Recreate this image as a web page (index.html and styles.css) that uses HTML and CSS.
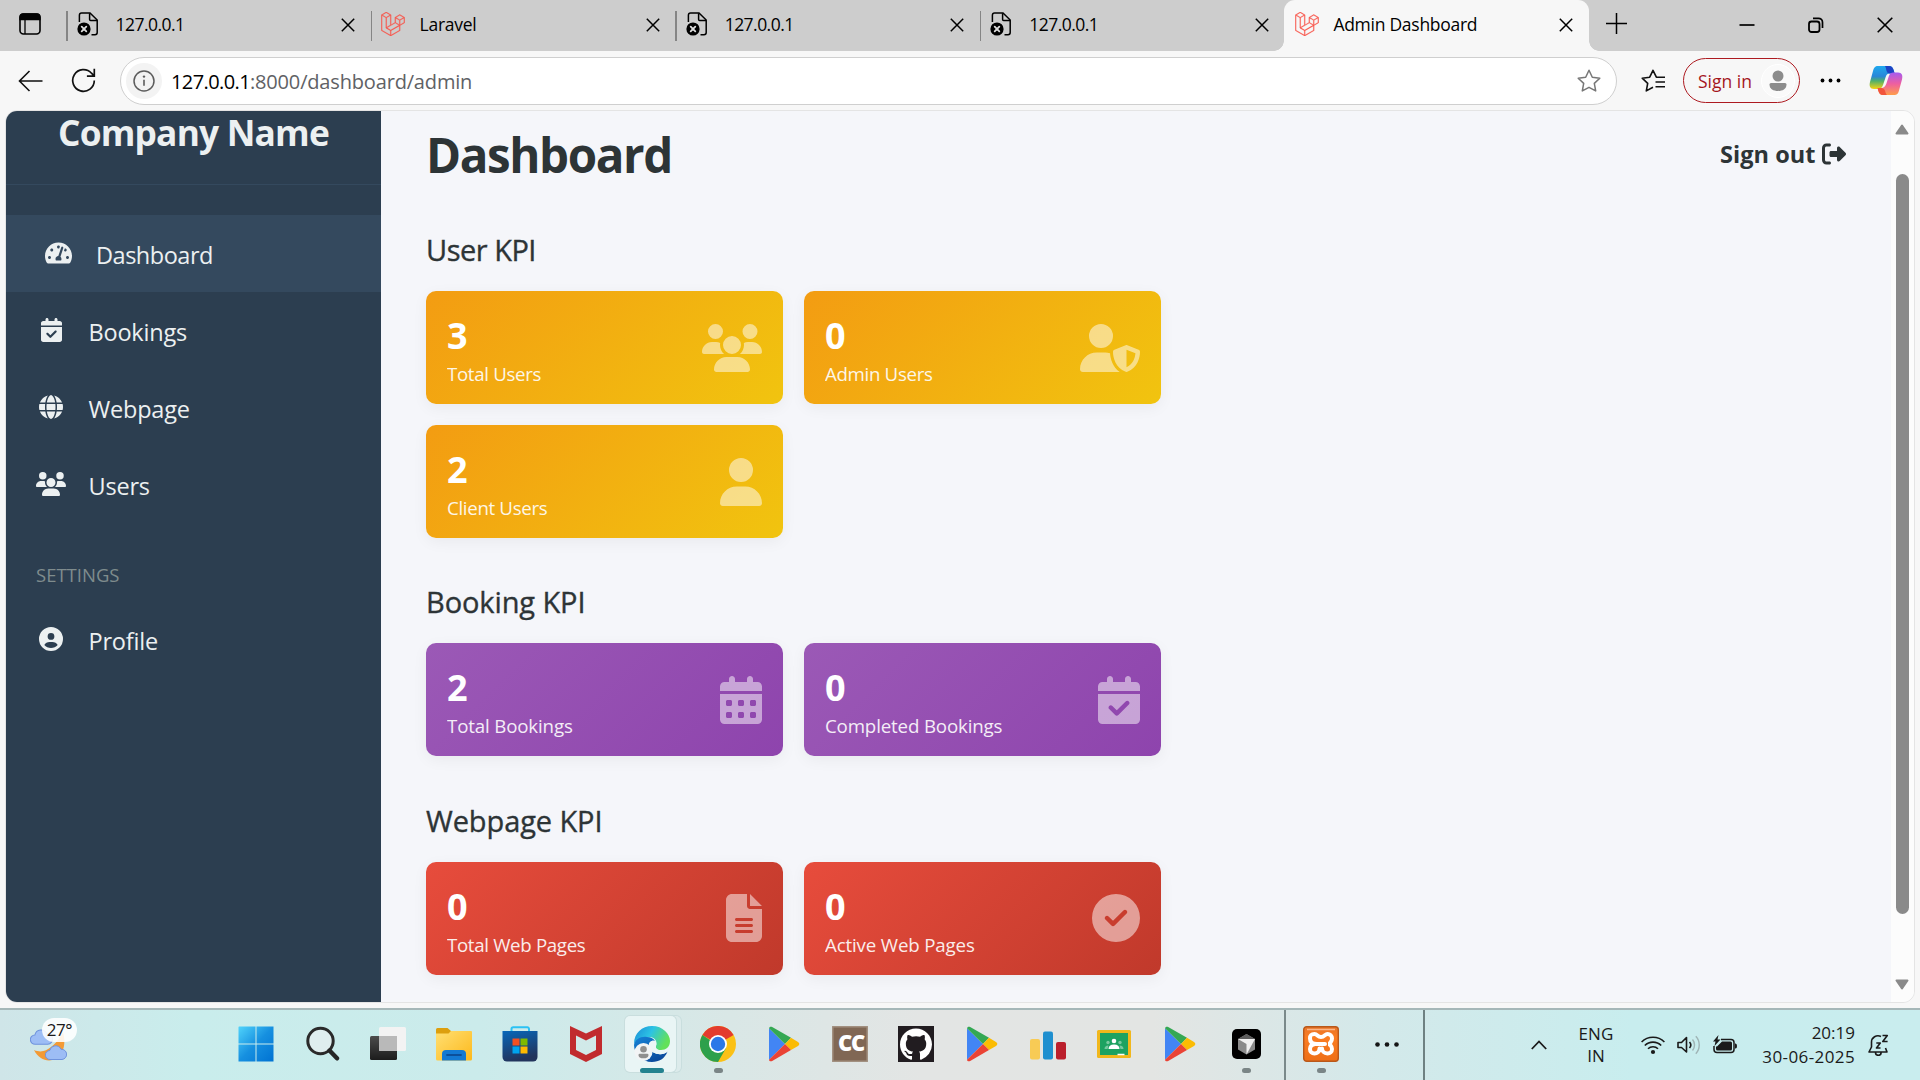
FILE: index.html
```html
<!DOCTYPE html>
<html lang="en">
<head>
<meta charset="utf-8">
<title>Admin Dashboard</title>
<link rel="stylesheet" href="styles.css">
</head>
<body>
<svg class="defs" aria-hidden="true">
  <defs>
    <symbol id="i-users" viewBox="0 0 640 512"><path d="M144 0a80 80 0 1 1 0 160A80 80 0 1 1 144 0zM512 0a80 80 0 1 1 0 160A80 80 0 1 1 512 0zM0 298.7C0 239.8 47.8 192 106.7 192h42.7c15.9 0 31 3.5 44.6 9.7c-1.3 7.2-1.9 14.7-1.9 22.3c0 38.2 16.8 72.5 43.3 96c-.2 0-.4 0-.7 0H21.3C9.6 320 0 310.4 0 298.7zM405.3 320c-.2 0-.4 0-.7 0c26.6-23.5 43.3-57.8 43.3-96c0-7.6-.7-15-1.9-22.3c13.6-6.3 28.7-9.7 44.6-9.7h42.7C592.2 192 640 239.8 640 298.7c0 11.8-9.6 21.3-21.3 21.3H405.3zM224 224a96 96 0 1 1 192 0 96 96 0 1 1 -192 0zM128 485.3C128 411.7 187.7 352 261.3 352H378.7C452.3 352 512 411.7 512 485.3c0 14.7-11.9 26.7-26.7 26.7H154.7c-14.7 0-26.7-11.9-26.7-26.7z"/></symbol>
    <symbol id="i-user" viewBox="0 0 448 512"><path d="M224 256A128 128 0 1 0 224 0a128 128 0 1 0 0 256zm-45.7 48C79.8 304 0 383.8 0 482.3C0 498.7 13.3 512 29.7 512H418.3c16.4 0 29.7-13.3 29.7-29.7C448 383.8 368.2 304 269.7 304H178.3z"/></symbol>
    <symbol id="i-shield" viewBox="0 0 640 512"><path d="M224 256A128 128 0 1 0 224 0a128 128 0 1 0 0 256zm-45.7 48C79.8 304 0 383.8 0 482.3C0 498.7 13.3 512 29.7 512H418.3c1.8 0 3.5-.2 5.3-.5c-76.3-55.1-99.8-141-103.1-200.2c-16.1-4.8-33.1-7.3-50.7-7.3H178.3zm308.8-78.3l-120 48C358 277.4 352 286.2 352 296c0 63.3 25.9 168.8 134.8 214.2c5.9 2.5 12.6 2.5 18.5 0C614.1 464.8 640 359.3 640 296c0-9.8-6-18.6-15.1-22.3l-120-48c-5.7-2.3-12.1-2.3-17.8 0zM591.4 312c-3.9 50.7-27.2 116.7-95.4 149.7V273.8L591.4 312z"/></symbol>
    <symbol id="i-cal" viewBox="0 0 448 512"><path fill-rule="evenodd" d="M128 0c17.7 0 32 14.3 32 32V64H288V32c0-17.7 14.3-32 32-32s32 14.3 32 32V64h48c26.5 0 48 21.5 48 48v48H0V112C0 85.5 21.5 64 48 64H96V32c0-17.7 14.3-32 32-32zM0 192H448V464c0 26.5-21.5 48-48 48H48c-26.5 0-48-21.5-48-48V192zm64 80v32c0 8.8 7.2 16 16 16h32c8.8 0 16-7.2 16-16V272c0-8.8-7.2-16-16-16H80c-8.8 0-16 7.2-16 16zm128 0v32c0 8.8 7.2 16 16 16h32c8.8 0 16-7.2 16-16V272c0-8.8-7.2-16-16-16H208c-8.8 0-16 7.2-16 16zm144-16c-8.8 0-16 7.2-16 16v32c0 8.8 7.2 16 16 16h32c8.8 0 16-7.2 16-16V272c0-8.8-7.2-16-16-16H336zM64 400v32c0 8.8 7.2 16 16 16h32c8.8 0 16-7.2 16-16V400c0-8.8-7.2-16-16-16H80c-8.8 0-16 7.2-16 16zm144-16c-8.8 0-16 7.2-16 16v32c0 8.8 7.2 16 16 16h32c8.8 0 16-7.2 16-16V400c0-8.8-7.2-16-16-16H208zm112 16v32c0 8.8 7.2 16 16 16h32c8.8 0 16-7.2 16-16V400c0-8.8-7.2-16-16-16H336c-8.8 0-16 7.2-16 16z"/></symbol>
    <symbol id="i-calcheck" viewBox="0 0 448 512"><path fill-rule="evenodd" d="M128 0c17.7 0 32 14.3 32 32V64H288V32c0-17.7 14.3-32 32-32s32 14.3 32 32V64h48c26.5 0 48 21.5 48 48v48H0V112C0 85.5 21.5 64 48 64H96V32c0-17.7 14.3-32 32-32zM0 192H448V464c0 26.5-21.5 48-48 48H48c-26.5 0-48-21.5-48-48V192zM329 305c9.4-9.4 9.4-24.6 0-33.9s-24.6-9.4-33.9 0l-95 95-47-47c-9.4-9.4-24.6-9.4-33.9 0s-9.4 24.6 0 33.9l64 64c9.4 9.4 24.6 9.4 33.9 0L329 305z"/></symbol>
    <symbol id="i-file" viewBox="0 0 384 512"><path fill-rule="evenodd" d="M64 0C28.7 0 0 28.7 0 64V448c0 35.3 28.7 64 64 64H320c35.3 0 64-28.7 64-64V160H256c-17.7 0-32-14.3-32-32V0H64zM256 0V128H384L256 0zM112 256H272c8.8 0 16 7.2 16 16s-7.2 16-16 16H112c-8.8 0-16-7.2-16-16s7.2-16 16-16zm0 64H272c8.8 0 16 7.2 16 16s-7.2 16-16 16H112c-8.8 0-16-7.2-16-16s7.2-16 16-16zm0 64H272c8.8 0 16 7.2 16 16s-7.2 16-16 16H112c-8.8 0-16-7.2-16-16s7.2-16 16-16z"/></symbol>
    <symbol id="i-check" viewBox="0 0 512 512"><path fill-rule="evenodd" d="M256 512A256 256 0 1 0 256 0a256 256 0 1 0 0 512zM369 209L241 337c-9.4 9.4-24.6 9.4-33.9 0l-64-64c-9.4-9.4-9.4-24.6 0-33.9s24.6-9.4 33.9 0l47 47L335 175c9.4-9.4 24.6-9.4 33.9 0s9.4 24.6 0 33.9z"/></symbol>
    <symbol id="i-globe" viewBox="0 0 512 512"><path d="M352 256c0 22.2-1.2 43.6-3.3 64H163.3c-2.2-20.4-3.3-41.8-3.3-64s1.2-43.6 3.3-64H348.7c2.2 20.4 3.3 41.8 3.3 64zm28.8-64H503.9c5.3 20.5 8.1 41.9 8.1 64s-2.8 43.5-8.1 64H380.8c2.1-20.6 3.2-42 3.2-64s-1.1-43.4-3.2-64zm112.6-32H376.7c-10-63.9-29.8-117.4-55.3-151.6c78.3 20.7 142 77.5 171.9 151.6zm-149.1 0H167.7c6.1-36.4 15.5-68.6 27-94.7c10.5-23.6 22.2-40.7 33.5-51.5C239.4 3.2 248.7 0 256 0s16.6 3.2 27.8 13.8c11.3 10.8 23 27.9 33.5 51.5c11.6 26 20.9 58.2 27 94.7zm-209 0H18.6C48.6 85.9 112.2 29.1 190.6 8.4C165.1 42.6 145.3 96.1 135.3 160zM8.1 192H131.2c-2.1 20.6-3.2 42-3.2 64s1.1 43.4 3.2 64H8.1C2.8 299.5 0 278.1 0 256s2.8-43.5 8.1-64zM194.7 446.6c-11.6-26-20.9-58.2-27-94.6H344.3c-6.1 36.4-15.5 68.6-27 94.6c-10.5 23.6-22.2 40.7-33.5 51.5C272.6 508.8 263.3 512 256 512s-16.6-3.2-27.8-13.8c-11.3-10.8-23-27.9-33.5-51.5zM135.3 352c10 63.9 29.8 117.4 55.3 151.6C112.2 482.9 48.6 426.1 18.6 352H135.3zm358.1 0c-30 74.1-93.6 130.9-171.9 151.6c25.5-34.2 45.2-87.7 55.3-151.6H493.4z"/></symbol>
    <symbol id="i-profile" viewBox="0 0 512 512"><path d="M399 384.2C376.9 345.8 335.4 320 288 320H224c-47.4 0-88.9 25.8-111 64.2c35.2 39.2 86.2 63.8 143 63.8s107.8-24.7 143-63.8zM0 256a256 256 0 1 1 512 0A256 256 0 1 1 0 256zm256 16a72 72 0 1 0 0-144 72 72 0 1 0 0 144z" fill-rule="evenodd"/></symbol>
    <symbol id="i-gauge" viewBox="0 0 576 512"><path fill-rule="evenodd" d="M288 32C128.94 32 0 160.94 0 320c0 52.8 14.25 102.26 39.06 144.8 5.61 9.62 16.3 15.2 27.44 15.2h443c11.14 0 21.83-5.58 27.44-15.2C561.75 422.26 576 372.8 576 320c0-159.06-128.94-288-288-288zm0 64c14.71 0 26.58 10.13 30.32 23.65-1.11 2.26-2.64 4.23-3.45 6.67l-9.22 27.67c-5.13 3.49-10.97 6.01-17.64 6.01-17.67 0-32-14.33-32-32S270.33 96 288 96zM96 384c-17.67 0-32-14.33-32-32s14.33-32 32-32 32 14.33 32 32-14.33 32-32 32zm48-160c-17.67 0-32-14.33-32-32s14.33-32 32-32 32 14.33 32 32-14.33 32-32 32zm246.77-72.41l-61.33 184C343.13 347.33 352 364.54 352 384c0 11.72-3.38 22.55-8.88 32H232.88c-5.5-9.45-8.88-20.28-8.88-32 0-33.94 26.5-61.43 59.9-63.59l61.34-184.01c4.17-12.56 17.73-19.45 30.36-15.17 12.57 4.19 19.35 17.79 15.17 30.36zm14.66 57.2l15.52-46.55c3.47-1.29 7.13-2.23 11.05-2.23 17.67 0 32 14.33 32 32s-14.33 32-32 32c-11.38-.01-20.89-6.28-26.57-15.22zM480 384c-17.67 0-32-14.33-32-32s14.33-32 32-32 32 14.33 32 32-14.33 32-32 32z"/></symbol>
    <symbol id="i-signout" viewBox="0 0 512 512"><path d="M377.9 105.9L500.7 228.7c7.2 7.2 11.3 17.1 11.3 27.3s-4.1 20.1-11.3 27.3L377.9 406.1c-6.4 6.4-15 9.9-24 9.9c-18.7 0-33.9-15.2-33.9-33.9l0-62.1-128 0c-17.7 0-32-14.3-32-32l0-64c0-17.7 14.3-32 32-32l128 0 0-62.1c0-18.7 15.2-33.9 33.9-33.9c9 0 17.6 3.6 24 9.9zM160 96L96 96c-17.7 0-32 14.3-32 32l0 256c0 17.7 14.3 32 32 32l64 0c17.7 0 32 14.3 32 32s-14.3 32-32 32l-64 0c-53 0-96-43-96-96L0 128C0 75 43 32 96 32l64 0c17.7 0 32 14.3 32 32s-14.3 32-32 32z"/></symbol>
    <symbol id="i-laravel" viewBox="0 0 24 24"><path fill="#f9554a" stroke="#f9554a" stroke-width=".3" d="M23.642 5.43a.364.364 0 01.014.1v5.149c0 .135-.073.26-.189.326l-4.323 2.49v4.934a.378.378 0 01-.188.326L9.93 23.949a.316.316 0 01-.066.027c-.008.002-.016.008-.024.01a.348.348 0 01-.192 0c-.011-.002-.02-.008-.03-.012-.02-.008-.042-.014-.062-.025L.533 18.755a.376.376 0 01-.189-.326V2.974c0-.033.005-.066.014-.098.003-.012.01-.02.014-.032a.369.369 0 01.023-.058c.004-.013.015-.022.023-.033l.033-.045c.012-.01.025-.018.037-.027.014-.012.027-.024.041-.034H.53L5.043.05a.375.375 0 01.375 0L9.93 2.647h.002c.015.01.027.021.04.033l.038.027c.013.014.02.03.033.045.008.011.02.021.025.033.01.02.017.038.024.058.003.011.01.021.013.032.01.031.014.064.014.098v9.652l3.76-2.164V5.527c0-.033.004-.066.013-.098.003-.01.01-.02.013-.032a.487.487 0 01.024-.059c.007-.012.018-.02.025-.033.012-.015.021-.03.033-.043.012-.012.025-.02.037-.028.014-.01.026-.023.041-.032h.001l4.513-2.598a.375.375 0 01.375 0l4.513 2.598c.016.01.027.021.042.031.012.01.025.018.036.028.013.014.022.03.034.044.008.012.019.021.024.033.011.02.018.04.024.06.006.01.012.021.015.032zm-.74 5.032V6.179l-1.578.908-2.182 1.256v4.283zm-4.51 7.75v-4.287l-2.147 1.225-6.126 3.498v4.325zM1.093 3.624v14.588l8.273 4.761v-4.325l-4.322-2.445-.002-.003H5.04c-.014-.01-.025-.021-.04-.031-.011-.01-.024-.018-.035-.027l-.001-.002c-.013-.012-.021-.025-.031-.04-.01-.011-.021-.022-.028-.036h-.003c-.008-.014-.013-.031-.02-.047-.006-.016-.014-.027-.018-.043a.49.49 0 01-.008-.057c-.002-.014-.006-.027-.006-.041V5.789l-2.18-1.257zM5.23.81L1.47 2.974l3.76 2.164 3.758-2.164zm1.956 13.505l2.182-1.256V3.624l-1.58.91-2.182 1.255v9.435zm11.581-10.95l-3.76 2.163 3.76 2.163 3.759-2.164zm-.376 4.978L16.21 7.087 14.63 6.18v4.283l2.182 1.256 1.58.908zm-8.65 9.654l5.514-3.148 2.756-1.572-3.757-2.163-4.323 2.489-3.941 2.27z"/></symbol>
    <symbol id="i-errpage" viewBox="0 0 22 24"><g fill="none" stroke="#000" stroke-width="1.5"><path d="M2.4 10V3.2A2.2 2.2 0 0 1 4.6 1H13l7.2 7v12.6A2.2 2.2 0 0 1 18 22.8h-3.5"/><path d="M12.6 1.2v6.2a1 1 0 0 0 1 1H20"/></g><circle cx="7" cy="17" r="6.6" fill="#000"/><path d="M4.7 14.7l4.6 4.6m0-4.6l-4.6 4.6" stroke="#ddd" stroke-width="1.8" stroke-linecap="round"/></symbol>
    <symbol id="i-close" viewBox="0 0 14 14"><path d="M.8.8l12.4 12.4M13.2.8L.8 13.2" stroke="#000" stroke-width="1.5" fill="none"/></symbol>
    <symbol id="i-play" viewBox="0 0 32 36"><path d="M1 2.2v31.600L17 18z" fill="#4285f4"/><path d="M1 2.2C1.200.8 2.800.2 4.200 1L23 11.8 17 18z" fill="#34a853"/><path d="M23 11.800L30 16c1.800 1 1.800 3 0 4l-7 4-6-6z" fill="#fbbc04"/><path d="M1 33.800c.2 1.400 1.800 2 3.200 1.200L23 24l-6-6z" fill="#ea4335"/></symbol>
    <symbol id="i-cloud" viewBox="0 0 22 16"><path d="M5 15.500a4.500 4.500 0 0 1-.3-9A6 6 0 0 1 16 5.300a5 5 0 0 1 1 10.200z" fill="#9dbdf5" stroke="#6f93dd"/></symbol>
    <linearGradient id="g-win" x2="1" y2="1"><stop stop-color="#50d3fb"/><stop offset=".5" stop-color="#1690e0"/><stop offset="1" stop-color="#0072d2"/></linearGradient>
    <linearGradient id="g-fold" x2="1" y2="1"><stop stop-color="#ffdf73"/><stop offset="1" stop-color="#fdb91c"/></linearGradient>
    <linearGradient id="g-store" y2="1" x2=".3"><stop stop-color="#0767ba"/><stop offset="1" stop-color="#22345c"/></linearGradient>
    <linearGradient id="g-dark" y2="1" x2="0"><stop stop-color="#4c4c4c"/><stop offset="1" stop-color="#1c1c1c"/></linearGradient>
    <linearGradient id="g-edge1" x2="1" y2=".4"><stop stop-color="#1a8bd8"/><stop offset=".5" stop-color="#2cc3e4"/><stop offset="1" stop-color="#63e159"/></linearGradient>
    <linearGradient id="g-edge2" x2=".6" y2="1"><stop stop-color="#1583d8"/><stop offset="1" stop-color="#0b4a9c"/></linearGradient>
    <linearGradient id="g-cop1" x2="0" y2="1"><stop stop-color="#1fa9ee"/><stop offset=".45" stop-color="#2a86d8"/><stop offset=".65" stop-color="#4fb06a"/><stop offset="1" stop-color="#f6d312"/></linearGradient>
    <linearGradient id="g-cop2" x2="0" y2="1"><stop stop-color="#a65bf0"/><stop offset=".5" stop-color="#ee5fa0"/><stop offset="1" stop-color="#ff9d4a"/></linearGradient>
    <linearGradient id="g-xam" x2="0" y2="1"><stop stop-color="#e8752a"/><stop offset=".3" stop-color="#fb7d22"/><stop offset="1" stop-color="#ee6f16"/></linearGradient>
  </defs>
</svg>

<div class="tabbar">
  <svg class="tab-actions" viewBox="0 0 22 22"><rect x="1" y="1" width="20" height="20" rx="3.500" fill="none" stroke="#000" stroke-width="1.600"/><path d="M1 6.500V4a3 3 0 0 1 3-3h14a3 3 0 0 1 3 3v2.500zM6 6v15" stroke="#000" stroke-width="1.300"/></svg>
  <div class="tab"><svg class="fav err"><use href="#i-errpage"/></svg><span class="tab-title ip">127.0.0.1</span><svg class="x"><use href="#i-close"/></svg></div>
  <div class="tab"><svg class="fav"><use href="#i-laravel"/></svg><span class="tab-title">Laravel</span><svg class="x"><use href="#i-close"/></svg></div>
  <div class="tab"><svg class="fav err"><use href="#i-errpage"/></svg><span class="tab-title ip">127.0.0.1</span><svg class="x"><use href="#i-close"/></svg></div>
  <div class="tab"><svg class="fav err"><use href="#i-errpage"/></svg><span class="tab-title ip">127.0.0.1</span><svg class="x"><use href="#i-close"/></svg></div>
  <div class="tab active"><svg class="fav"><use href="#i-laravel"/></svg><span class="tab-title">Admin Dashboard</span><svg class="x"><use href="#i-close"/></svg></div>
  <svg class="newtab" viewBox="0 0 21 21"><path d="M10.500 0v21M0 10.500h21" stroke="#000" stroke-width="1.500"/></svg>
  <div class="winctl">
    <svg viewBox="0 0 16 16"><path d="M.5 8h15" stroke="#000" stroke-width="1.700"/></svg>
    <svg viewBox="0 0 16 16"><rect x="1" y="4.500" width="10.500" height="10.500" rx="2.500" fill="none" stroke="#000" stroke-width="1.800"/><path d="M5 1.300h5.500a4 4 0 0 1 4 4V11" fill="none" stroke="#000" stroke-width="1.700"/></svg>
    <svg viewBox="0 0 16 16"><path d="M.7.7l14.600 14.600M15.300.7L.7 15.300" stroke="#000" stroke-width="1.600"/></svg>
  </div>
</div>

<div class="toolbar">
  <svg class="back" viewBox="0 0 25 22"><path d="M11.500 1L1.500 11l10 10M1.500 11H24.500" fill="none" stroke="#111" stroke-width="1.600"/></svg>
  <svg class="reload" viewBox="0 0 25 25"><path d="M23.300 12.500A10.800 10.800 0 1 1 20.500 5.200L23 7.800M23.300.8v7.400h-7.400" fill="none" stroke="#111" stroke-width="1.700"/></svg>
  <div class="address">
    <span class="info"><svg viewBox="0 0 22 22"><circle cx="11" cy="11" r="10" fill="none" stroke="#5c5c5c" stroke-width="1.500"/><path d="M11 9.800v6" stroke="#5c5c5c" stroke-width="1.600"/><circle cx="11" cy="6.600" r="1.200" fill="#5c5c5c"/></svg></span>
    <span class="url"><b>127.0.0.1</b>:8000/dashboard/admin</span>
    <svg class="star" viewBox="0 0 24 24"><path d="M12 1.300l3.300 6.900 7.500 1-5.500 5.200 1.400 7.500L12 18.300l-6.700 3.600 1.400-7.500L1.200 9.200l7.500-1z" fill="none" stroke="#777" stroke-width="1.500" stroke-linejoin="round"/></svg>
  </div>
  <svg class="favs" viewBox="0 0 24 24"><path d="M15.500 8.300L12 1.300 8.700 8.200l-7.500 1 5.500 5.200-1.400 7.500L12 18.300M15.200 8.300H24M14.500 13H24M14.500 17.800H24" fill="none" stroke="#111" stroke-width="1.600" stroke-linejoin="round"/></svg>
  <div class="signin"><span>Sign in</span><svg viewBox="0 0 34 34"><circle cx="17" cy="17" r="16.500" fill="#fafafa" stroke="#fff"/><circle cx="17" cy="12" r="5.500" fill="#8c8c8c"/><path d="M8.500 20.500q0-1.500 1.500-1.500h14q1.500 0 1.500 1.500c0 4.500-4 6.500-8.500 6.500s-8.500-2-8.500-6.500z" fill="#8c8c8c"/></svg></div>
  <svg class="more" viewBox="0 0 21 5"><circle cx="2.500" cy="2.500" r="1.900"/><circle cx="10.500" cy="2.500" r="1.900"/><circle cx="18.500" cy="2.500" r="1.900"/></svg>
  <svg class="copilot" viewBox="0 0 34 31"><path d="M9 1h11c3 0 4 2 4.800 4.500l.8 3h-4.500c-3 0-3.800 1.500-4.600 4l-2.300 7c-.9 2.700-2 4.500-5 4.500H5C1 24 0 21 1 17L4 6c1-3.500 2-5 5-5z" fill="url(#g-cop1)"/><path d="M16 1h4c3 0 4 2 4.800 4.500l.8 3h-4.500c-2 0-3-.500-3.600-2.700C17 4 17 2.500 16 1z" fill="#1d43c4"/><path d="M25 30H14c-3 0-4-2-4.800-4.500l-.6-2.500H12c3 0 4.500-2 5.400-4.500l2.300-7c.9-2.700 2-4 5-4H29c4 0 5 3 4 7l-3 11c-1 3.500-2 4.500-5 4.500z" fill="url(#g-cop2)"/><path d="M18 30h-4c-3 0-4-2-4.800-4.500l-.6-2.500H12c2 0 3.400.8 4 2.800.6 2 .8 3.200 2 4.200z" fill="#f2553c"/></svg>
</div>

<div class="viewport">
  <aside class="sidebar">
    <div class="brand">Company Name</div>
    <nav>
      <a class="item active"><span class="ico"><svg class="w27"><use href="#i-gauge"/></svg></span><span>Dashboard</span></a>
      <a class="item"><span class="ico"><svg class="w21"><use href="#i-calcheck"/></svg></span><span>Bookings</span></a>
      <a class="item"><span class="ico"><svg class="w24"><use href="#i-globe"/></svg></span><span>Webpage</span></a>
      <a class="item"><span class="ico"><svg class="w30"><use href="#i-users"/></svg></span><span>Users</span></a>
      <div class="group">SETTINGS</div>
      <a class="item"><span class="ico"><svg class="w24"><use href="#i-profile"/></svg></span><span>Profile</span></a>
    </nav>
  </aside>
  <main class="main">
    <header class="head"><h1>Dashboard</h1><a class="signout"><span>Sign out</span><svg><use href="#i-signout"/></svg></a></header>
    <section>
      <h2 class="tight">User KPI</h2>
      <div class="cards">
        <div class="card orange"><div><div class="num">3</div><div class="lab tight">Total Users</div></div><svg class="w60"><use href="#i-users"/></svg></div>
        <div class="card orange"><div><div class="num">0</div><div class="lab tight">Admin Users</div></div><svg class="w60"><use href="#i-shield"/></svg></div>
        <div class="card orange"><div><div class="num">2</div><div class="lab tight">Client Users</div></div><svg class="w42"><use href="#i-user"/></svg></div>
      </div>
    </section>
    <section>
      <h2>Booking KPI</h2>
      <div class="cards">
        <div class="card purple"><div><div class="num">2</div><div class="lab">Total Bookings</div></div><svg class="w42"><use href="#i-cal"/></svg></div>
        <div class="card purple"><div><div class="num">0</div><div class="lab">Completed Bookings</div></div><svg class="w42"><use href="#i-calcheck"/></svg></div>
      </div>
    </section>
    <section>
      <h2>Webpage KPI</h2>
      <div class="cards">
        <div class="card red"><div><div class="num">0</div><div class="lab tight">Total Web Pages</div></div><svg class="w36"><use href="#i-file"/></svg></div>
        <div class="card red"><div><div class="num">0</div><div class="lab">Active Web Pages</div></div><svg class="w48"><use href="#i-check"/></svg></div>
      </div>
    </section>
  </main>
  <div class="scroll">
    <svg viewBox="0 0 14 11"><path d="M7 1.500L12.500 9.500h-11z" fill="#8a8a8a" stroke="#8a8a8a" stroke-width="2" stroke-linejoin="round"/></svg>
    <div class="thumb"></div>
    <svg viewBox="0 0 14 11"><path d="M7 9.500L12.500 1.500h-11z" fill="#8a8a8a" stroke="#8a8a8a" stroke-width="2" stroke-linejoin="round"/></svg>
  </div>
</div>

<footer class="taskbar">
  <div class="weather">
    <svg class="sky" viewBox="0 0 48 46"><path d="M33 12c3 11 1 21-6 26-8 5-18 2-23-8 7 3 12 1 17-3 6-5 9-9 12-15z" fill="#f39a35"/><use href="#i-cloud" x="0" y="8" width="23" height="17"/><use href="#i-cloud" x="15" y="24" width="22" height="16"/></svg>
    <span class="temp">27°</span>
  </div>
  <div class="apps">
    <div class="app"><svg viewBox="0 0 36 36"><path d="M1 .5h16.500v17H.5V1zM18.500.5H35.500v17h-17zM.5 18.500h17v17H.5zM18.500 18.500h17v17h-17z" fill="url(#g-win)"/></svg></div>
    <div class="app"><svg viewBox="0 0 36 36"><circle cx="16.500" cy="15" r="12.700" fill="#dfeeef" stroke="#2a2a2a" stroke-width="3"/><path d="M25.500 24.500l7.500 7.800" stroke="#262626" stroke-width="4.400" stroke-linecap="round"/></svg></div>
    <div class="app"><svg viewBox="0 0 36 36"><rect x="0" y="10" width="27" height="24" rx="1.500" fill="url(#g-dark)"/><rect x="9" y="1" width="27" height="24" rx="1.500" fill="#f3f3f3"/><path d="M9 10h18v15H10.500A1.500 1.500 0 0 1 9 23.500z" fill="#b9b9b9"/></svg></div>
    <div class="app"><svg viewBox="0 0 36 36"><path d="M0 8V3.500A1.500 1.500 0 0 1 1.500 2h10L15 5h19.500v5H0z" fill="#dd9f0e"/><path d="M0 7.500h12.500L15 5h20a1 1 0 0 1 1 1v27a1.500 1.500 0 0 1-1.500 1.500h-33A1.500 1.500 0 0 1 0 33z" fill="url(#g-fold)"/><path d="M6 34.500V28q0-4 4-4h16q4 0 4 4v6.500z" fill="#1379d3"/><path d="M11 29h14" stroke="#0c4f9a" stroke-width="1.800" stroke-linecap="round"/></svg></div>
    <div class="app"><svg viewBox="0 0 36 36"><path d="M9.500 7V3a1.700 1.700 0 0 1 1.700-1.700h14A1.700 1.700 0 0 1 27 3v4" fill="none" stroke="#2cc2f4" stroke-width="2"/><path d="M.5 5h35v26a4.500 4.500 0 0 1-4.500 4.500H5A4.500 4.500 0 0 1 .5 31z" fill="url(#g-store)"/><path d="M10.500 12.500h7v7h-7z" fill="#f25022"/><path d="M18.500 12.500h7v7h-7z" fill="#7fba00"/><path d="M10.500 20.500h7v7h-7z" fill="#00a4ef"/><path d="M18.500 20.500h7v7h-7z" fill="#ffb900"/></svg></div>
    <div class="app"><svg viewBox="0 0 36 36"><path d="M2 0l16 7.500L34 0v28l-16 8-16-8zM8 9.500V24l10 5 10-5V9.500l-10 5z" fill="#c12b2e" fill-rule="evenodd"/></svg></div>
    <div class="app current"><svg viewBox="0 0 36 36"><path d="M0 18C0 7 8 0 18 0c11 0 18 8 18 15 0 6-4 9-9 9-4 0-6-2-5-4 2-4-1-9-7-9C8 11 2 14 0 18z" fill="url(#g-edge1)"/><path d="M0 19c1-6 7-9 13-8 4 0 7 2 8 4-4-1-7 2-6 6 1 5 8 8 13 7 2 0 4-1 5.500-2.500C31 32.500 25 36 18 36 8 36 0 28 0 19z" fill="url(#g-edge2)"/><path d="M21 15c-4-1-7 2-6 6 1 5 8 8 13 7 2 0 4-1 5.500-2.500.5-1-.5-2-1.500-1.600-6 2-11-.4-10-3.900.6-2 .2-3.500-1-5z" fill="#ecf6f6"/><circle cx="9.500" cy="26" r="9" fill="#f2f4f5"/><circle cx="9.500" cy="23.200" r="3.300" fill="#8f8f8f"/><path d="M4.500 29q0-1.300 1.300-1.300h7.400q1.300 0 1.300 1.300c0 2.500-2.400 3.300-5 3.300s-5-.8-5-3.300z" fill="#8f8f8f"/></svg></div>
    <div class="app run"><svg viewBox="0 0 36 36"><circle cx="18" cy="18" r="18" fill="#fbc116"/><path d="M18 18L2.400 9A18 18 0 0 1 33.600 9z" fill="#e33b2e"/><path d="M18 18l-2 0L2.400 9A18 18 0 0 0 18 36l7.800-13.500z" fill="#2da04b"/><circle cx="18" cy="18" r="9" fill="#fff"/><circle cx="18" cy="18" r="7.200" fill="#2b78e8"/></svg></div>
    <div class="app"><svg viewBox="-2 0 36 36"><use href="#i-play" width="32" height="36"/></svg></div>
    <div class="app"><svg viewBox="0 0 36 36"><rect x=".8" y=".8" width="34.400" height="34.400" fill="#806754" stroke="#a08e7d" stroke-width="1.500"/><text x="19" y="25" text-anchor="middle" class="cc">CC</text></svg></div>
    <div class="app"><svg viewBox="0 0 36 36"><rect width="36" height="36" fill="#211c20"/><g transform="translate(2 2.500) scale(2)"><path fill="#fff" d="M8 0C3.580 0 0 3.580 0 8c0 3.540 2.290 6.530 5.470 7.590.4.070.55-.17.55-.38 0-.19-.01-.82-.01-1.490-2.010.37-2.530-.49-2.690-.94-.09-.23-.48-.94-.82-1.130-.28-.15-.68-.52-.01-.53.63-.01 1.080.58 1.230.82.72 1.210 1.870.87 2.330.66.07-.52.28-.87.51-1.070-1.780-.2-3.640-.89-3.640-3.950 0-.87.31-1.590.82-2.150-.08-.2-.36-1.020.08-2.120 0 0 .67-.21 2.200.82.64-.18 1.320-.27 2-.27.68 0 1.360.09 2 .27 1.530-1.040 2.200-.82 2.200-.82.44 1.100.16 1.920.08 2.120.51.56.82 1.270.82 2.150 0 3.070-1.870 3.750-3.650 3.950.29.25.54.73.54 1.480 0 1.070-.01 1.930-.01 2.200 0 .21.15.46.55.38A8.013 8.013 0 0016 8c0-4.420-3.580-8-8-8z"/></g></svg></div>
    <div class="app"><svg viewBox="-2 0 36 36"><use href="#i-play" width="32" height="36"/></svg></div>
    <div class="app"><svg viewBox="0 0 36 36"><rect x="0" y="13" width="10" height="20.500" rx="2" fill="#f8cb55"/><rect x="13" y="5.500" width="10" height="28" rx="2" fill="#1f8fcf"/><rect x="26" y="16" width="10" height="17.500" rx="2" fill="#bb1f2c"/></svg></div>
    <div class="app"><svg viewBox="0 0 36 36"><rect x="1" y="4" width="34" height="28" rx="1.500" fill="#f1b71c"/><rect x="4" y="7" width="28" height="22" fill="#1da261"/><circle cx="18" cy="15" r="2.300" fill="#fff"/><path d="M12.500 23q0-4.500 5.500-4.500t5.500 4.500z" fill="#fff"/><circle cx="12" cy="16.500" r="1.700" fill="#79c9a0"/><circle cx="24" cy="16.500" r="1.700" fill="#79c9a0"/><path d="M8.500 23q0-3.500 4-3.500L11.500 23zM27.500 23q0-3.500-4-3.500l1 3.500z" fill="#79c9a0"/><path d="M21.500 28.500h7" stroke="#fff" stroke-width="1.500"/></svg></div>
    <div class="app"><svg viewBox="-2 0 36 36"><use href="#i-play" width="32" height="36"/></svg></div>
    <div class="app run"><svg viewBox="0 0 36 36"><rect x="4" y="3" width="29" height="30" rx="5" fill="#000"/><path d="M18.500 8l8.500 5v10.500l-8.500 5-8.500-5V13z" fill="#8b8b8b"/><path d="M10 13h17l-8.500 15.500V18z" fill="#f1f1f1"/><path d="M18.500 8l8.500 5H10z" fill="#5c5c5c"/></svg></div>
  </div>
  <div class="pinned">
    <div class="app run"><svg viewBox="0 0 36 36"><rect x=".7" y=".7" width="34.600" height="34.600" rx="3" fill="url(#g-xam)" stroke="#b9581a" stroke-width="1.400"/><path d="M4 3.500h28" stroke="#fbb587" stroke-width="1.500"/><path d="M14 18h8M14 18c-4 0-7-1.500-7-5.500S9 8 11.500 8c3 0 3 3 6.500 3s4-3 6.500-3S29 9.500 29 12.500 26.500 18 25 18c1.500 0 4 2 4 5s-2 4.500-4.500 4.500c-3.500 0-5.500-2.500-5.500-5M12 18c-3 .5-5 2-5 5s2 4.500 4.500 4.500 5-1.500 5-5" fill="none" stroke="#fff" stroke-width="4" stroke-linecap="round"/></svg></div>
    <div class="app"><svg viewBox="0 0 36 36"><g fill="#151515"><circle cx="8.500" cy="18.500" r="2.300"/><circle cx="18" cy="18.500" r="2.300"/><circle cx="27.500" cy="18.500" r="2.300"/></g></svg></div>
  </div>
  <div class="tray">
    <svg class="chev" viewBox="0 0 16 10"><path d="M.8 9L8 1.500 15.200 9" fill="none" stroke="#1a1a1a" stroke-width="1.800"/></svg>
    <div class="lang">ENG<br>IN</div>
    <svg class="t24" viewBox="0 0 24 20"><g fill="none" stroke="#1a1a1a" stroke-width="1.600"><path d="M.6 7a16.200 16.200 0 0 1 22.800 0M3.800 10.500a11.600 11.600 0 0 1 16.400 0M7 13.800a7 7 0 0 1 10 0"/></g><circle cx="12" cy="17" r="2.100" fill="#1a1a1a"/></svg>
    <svg class="t24 vol" viewBox="0 0 24 20"><path d="M1 7.500v5h3.500L9.500 17V2.500L4.500 7.500zM12.500 7a4.500 4.500 0 0 1 0 6" fill="none" stroke="#1a1a1a" stroke-width="1.600" stroke-linejoin="round"/><path d="M15.500 4.500a8.500 8.500 0 0 1 0 11M18.800 1.200a13 13 0 0 1 0 17.600" fill="none" stroke="#9fb4b5" stroke-width="1.400"/></svg>
    <svg class="t24 bat" viewBox="0 0 24 20"><path d="M8 4.500h10a3 3 0 0 1 3 3v7a3 3 0 0 1-3 3H4a3 3 0 0 1-3-3V11" fill="none" stroke="#1a1a1a" stroke-width="1.500"/><path d="M9 6.500h8.500q1.500 0 1.500 1.500v6q0 1.500-1.500 1.500H4.500Q3 15.500 3 14v-2.500h1zM22 8.500h.5q1.500 0 1.500 2.500t-1.500 2.500H22zM5.500 0L0 6.500h2.500L1.500 11 7.500 4.500H4.500z" fill="#1a1a1a"/></svg>
    <div class="clock">20:19<br><span class="date">30-06-2025</span></div>
    <svg class="bell" viewBox="0 0 21 22"><path d="M13 2.500A6.500 6.500 0 0 0 3.500 8.500V13L1 18h18l-1.500-4M7.500 18.500a2.800 2.800 0 0 0 5.600 0M14.500 1.500h4.800l-4.500 6H19.600M8.300 9h4l-3.800 5H12.500" fill="none" stroke="#1a1a1a" stroke-width="1.600" stroke-linejoin="round"/></svg>
  </div>
</footer>
</body>
</html>
```
FILE: styles.css
```css
* { box-sizing: border-box; }
body { margin: 0; width: 1920px; height: 1080px; overflow: hidden; display: flex; flex-direction: column; background: #f7f7f7; font-family: "Open Sans", "Noto Sans", sans-serif; color: #2d3436; }
svg { display: block; flex: none; }
.defs { position: absolute; width: 0; height: 0; }

/* Browser tabs */
.tabbar { height: 51px; flex: none; background: #cdcdcd; display: flex; align-items: stretch; color: #000; font-size: 17.5px; }
.tab-actions { width: 22px; height: 22px; margin: 13px 25px 0 19px; }
.tab { width: 304.6px; display: flex; align-items: flex-start; padding: 12px 15.5px 0 10.5px; position: relative; }
.tab::before { content: ""; position: absolute; left: 0; top: 11px; width: 1.5px; height: 30px; background: #858585; }
.fav { width: 24px; height: 24px; }
.fav.err { width: 22px; margin-right: 2px; }
.tab-title { flex: 1; margin-left: 14.5px; line-height: 24px; margin-top: -.5px; letter-spacing: -.27px; }
.tab-title.ip { letter-spacing: -.54px; margin-left: 15px; }
.x { width: 14px; height: 14px; margin-top: 6px; }
.tab.active { background: #f7f7f7; border-radius: 11px 11px 0 0; }
.tab.active::before, .tab.active::after { top: auto; bottom: 0; width: 10px; height: 10px; background: radial-gradient(circle at 0 0, transparent 9.5px, #f7f7f7 10px); }
.tab.active::before { left: -10px; }
.tab.active::after { content: ""; position: absolute; right: -10px; background: radial-gradient(circle at 100% 0, transparent 9.5px, #f7f7f7 10px); }
.newtab { width: 21px; height: 21px; margin: 13px 0 0 17px; }
.winctl { display: flex; gap: 53px; margin: 17px 0 0 112.5px; }
.winctl svg { width: 16px; height: 16px; }

/* Address row */
.toolbar { height: 59px; flex: none; display: flex; align-items: center; }
.back { width: 25px; height: 22px; margin-left: 17.5px; }
.reload { width: 25px; height: 25px; margin-left: 28.5px; }
.address { width: 1497px; height: 48px; margin-left: 24px; border: 1.5px solid #cfcfcf; border-radius: 24px; background: #fff; display: flex; align-items: center; padding: 0 15px 0 5px; }
.info { width: 36px; height: 36px; border-radius: 50%; background: #f3f3f3; display: grid; place-items: center; }
.info svg { width: 22px; height: 22px; }
.url { flex: 1; margin-left: 9px; padding-top: 1px; font-size: 20px; letter-spacing: -.17px; color: #606165; }
.url b { font-weight: 400; letter-spacing: -.6px; color: #000; }
.star, .favs { width: 24px; height: 24px; }
.favs { margin-left: 24px; }
.signin { width: 117px; height: 45px; margin-left: 18px; border: 1.5px solid #ad1a20; border-radius: 23px; display: flex; align-items: center; justify-content: space-between; padding: 0 4px 0 14px; color: #a4161c; font-size: 17.5px; }
.signin svg { width: 34px; height: 34px; }
.more { width: 21px; height: 5px; margin-left: 20px; }
.copilot { width: 34px; height: 31px; margin-left: 28px; }

/* Page */
.viewport { height: 893px; width: 1909.5px; margin: 0 0 5px 5px; flex: none; border: 1px solid #e4e4e4; border-radius: 12px; overflow: hidden; display: flex; background: #f5f6fa; }
.sidebar { width: 375px; background: #2c3e50; color: #ecf0f1; }
.brand { height: 74px; border-bottom: 1px solid #34495e; text-align: center; font-size: 35.3px; letter-spacing: -.8px; font-weight: 700; line-height: 42px; white-space: nowrap; }
nav { padding-top: 30px; }
.item { height: 77px; padding-left: 30px; display: flex; align-items: center; font-size: 23.5px; letter-spacing: -.2px; }
.item > span:last-child { padding-top: 2px; }
.item.active { background: #34495e; padding-left: 37.5px; letter-spacing: -.48px; }
.ico { width: 30px; height: 24px; display: flex; justify-content: center; margin: 0 22.5px 1px 0; }
.ico svg { height: 24px; fill: #ecf0f1; }
.w21 { width: 21px; }
.w24 { width: 24px; }
.w27 { width: 27px; }
.w30 { width: 30px; }
.group { height: 78px; padding: 39px 0 0 30px; font-size: 18.5px; line-height: 26px; color: #7f8c8d; }
.main { flex: 1; padding: 0 45px; }
.head { display: flex; justify-content: space-between; height: 75px; }
h1 { margin: 0; font-size: 47.5px; letter-spacing: -1.39px; font-weight: 700; line-height: 88px; }
.signout { display: flex; font-size: 23.5px; letter-spacing: .05px; font-weight: 700; line-height: 87px; }
.signout svg { width: 24px; height: 24px; margin: 31px 0 0 6px; fill: #2d3436; }
section { padding-top: 46.2px; }
h2 { margin: 0 0 23px; font-size: 29px; line-height: 36px; font-weight: 500; letter-spacing: -.1px; -webkit-text-stroke: .35px #2d3436; }
h2.tight { letter-spacing: -.5px; }
.cards { display: grid; grid-template-columns: 357px 357px; gap: 21px; }
.card { height: 113px; border-radius: 10px; padding: 8px 21px 0; display: flex; justify-content: space-between; align-items: center; color: #fff; box-shadow: 0 4px 15px rgba(0,0,0,.05); }
.orange { background: linear-gradient(135deg, #f39c12, #f1c40f); }
.purple { background: linear-gradient(135deg, #9b59b6, #8e44ad); }
.red { background: linear-gradient(135deg, #e74c3c, #c0392b); }
.num { padding-top: 1px; font-size: 36px; font-weight: 700; line-height: 40px; }
.lab { margin-top: 4px; font-size: 18.7px; line-height: 28px; letter-spacing: -.15px; opacity: .9; }
.lab.tight { letter-spacing: -.33px; }
.card svg { height: 48px; fill: #fff; opacity: .5; margin-bottom: 8px; }
.w36 { width: 36px; }
.w42 { width: 42px; }
.w48 { width: 48px; }
.w60 { width: 60px; }
.scroll { width: 23px; background: #fcfcfc; display: flex; flex-direction: column; align-items: center; padding: 13px 0 12px; }
.scroll svg { width: 14px; height: 11px; }
.thumb { width: 13px; height: 740px; margin: 39px 0 65px; border-radius: 7px; background: #8a8a8a; }

/* Taskbar */
.taskbar { flex: none; height: 72px; border-top: 2px solid #a5b7b8; display: flex; background: linear-gradient(90deg, #cfe5e8 0, #c9edec 10%, #cbebeb 25%, #d9e7e6 38%, #e3e5e4 48%, #e3e5e3 60%, #d3e9ea 72%, #c8edee 85%, #c9edee 100%); color: #1a1a1a; font-size: 17px; }
.weather { width: 223px; padding: 10px 0 0 30px; position: relative; }
.sky { width: 48px; height: 46px; }
.temp { position: absolute; left: 42px; top: 8px; width: 35px; height: 24px; border-radius: 12px; background: rgba(255,255,255,.88); text-align: center; line-height: 24px; letter-spacing: -.4px; }
.apps, .pinned { display: flex; }
.apps { width: 1062.5px; border-right: 2px solid #7b8a8b; }
.pinned { padding-left: 2.5px; width: 139.5px; border-right: 2px solid #6e8182; }
.app { width: 66px; position: relative; display: flex; justify-content: center; padding-top: 16px; }
.app > svg { width: 36px; height: 36px; position: relative; }
.current::before { content: ""; position: absolute; left: 6px; top: 6px; width: 51px; height: 56px; background: #e9f5f5; border-radius: 5px; box-shadow: 0 0 0 1px #c9dede, 5px 0 0 #dcebeb, 5px 0 0 1px #c9dede; }
.run::after, .current::after { content: ""; position: absolute; left: 28.5px; bottom: 7px; width: 9px; height: 5px; border-radius: 3px; background: #7a8586; }
.current::after { left: 21px; width: 24px; background: #23828f; }
.cc { font: 800 22px "Open Sans", sans-serif; fill: #fff; letter-spacing: -1.2px; }
.tray { flex: 1; display: flex; align-items: center; }
.chev { width: 16px; height: 10px; margin-left: 106px; }
.lang { width: 36px; margin-left: 31px; text-align: center; line-height: 22.5px; letter-spacing: .1px; }
.t24 { width: 24px; height: 20px; margin-left: 27px; }
.t24.vol, .t24.bat { margin-left: 12px; }
.clock { width: 95px; margin-left: 23px; text-align: right; line-height: 24px; padding-bottom: 1px; }
.date { letter-spacing: .4px; }
.bell { width: 21px; height: 22px; margin-left: 13px; }
```
